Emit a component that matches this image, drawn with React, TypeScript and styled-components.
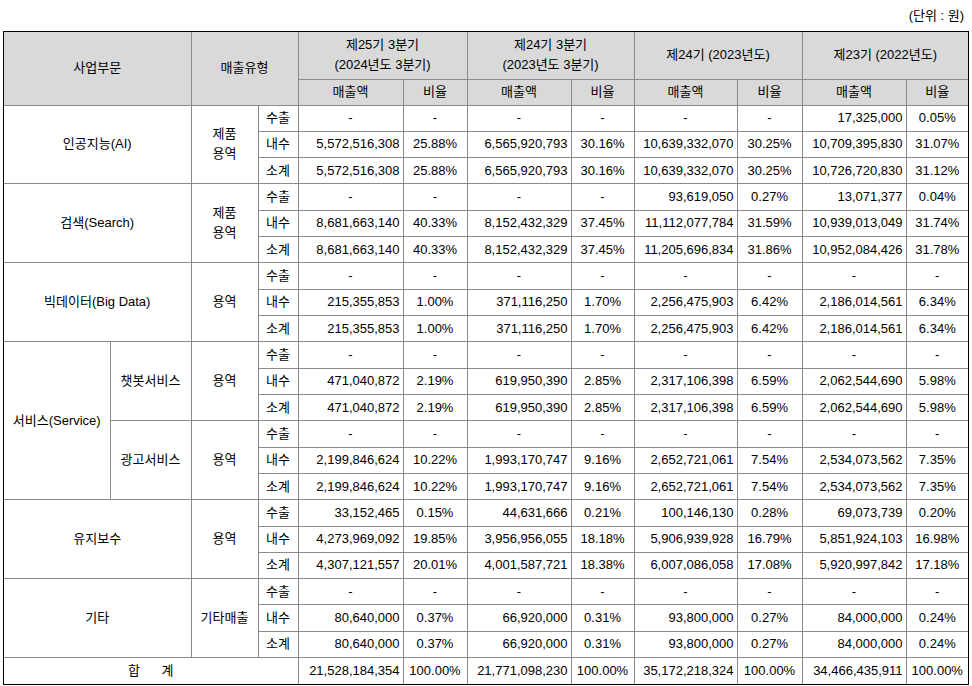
import React from "react";
import styled, { createGlobalStyle } from "styled-components";

const GlobalStyle = createGlobalStyle`
  html, body { margin: 0; padding: 0; background: #ffffff; }
  body {
    font-family: "Liberation Sans", "Noto Sans CJK KR", sans-serif;
    font-size: 13px;
    color: #000000;
  }
`;

const Page = styled.div`
  width: 972px;
  padding: 0 4px 0 3px;
  box-sizing: border-box;
`;

const Unit = styled.div`
  height: 31px;
  display: flex;
  align-items: center;
  justify-content: flex-end;
  padding-right: 4px;
  padding-top: 1px;
  box-sizing: border-box;
  line-height: 16px;
`;

const Frame = styled.div`
  border: 1px solid #000000;
  width: 966px;
  box-sizing: border-box;
`;

const Table = styled.table`
  width: 964px;
  border-collapse: collapse;
  table-layout: fixed;
  border-style: hidden;
`;

const HeadRow = styled.tr<{ $h: number }>`
  height: ${(p) => p.$h}px;
`;

const BodyRow = styled.tr`
  height: 26.32px;
`;

const HeadCell = styled.th`
  background: #d9d9d9;
  border: 1px solid #8a8a8a;
  font-weight: normal;
  text-align: center;
  vertical-align: middle;
  padding: 0;
  line-height: 20px;
`;

const Cell = styled.td<{ $align?: "left" | "center" | "right" }>`
  border: 1px solid #8a8a8a;
  padding: 0 ${(p) => (p.$align === "right" ? "3px" : "0")} 0 0;
  text-align: ${(p) => p.$align ?? "center"};
  vertical-align: middle;
  line-height: 20px;
  white-space: nowrap;
`;

const widths = [106, 81, 67, 40, 105, 64, 104, 63, 103, 65, 104, 62];

type Line = { kind: string; values: string[] };
type Sub = { label?: string; type: React.ReactNode; lines: Line[] };
type Group = { name: string; subs: Sub[] };

const dash8 = ["-", "-", "-", "-", "-", "-", "-", "-"];

const groups: Group[] = [
  {
    name: "인공지능(AI)",
    subs: [
      {
        type: (
          <>
            제품
            <br />
            용역
          </>
        ),
        lines: [
          { kind: "수출", values: ["-", "-", "-", "-", "-", "-", "17,325,000", "0.05%"] },
          { kind: "내수", values: ["5,572,516,308", "25.88%", "6,565,920,793", "30.16%", "10,639,332,070", "30.25%", "10,709,395,830", "31.07%"] },
          { kind: "소계", values: ["5,572,516,308", "25.88%", "6,565,920,793", "30.16%", "10,639,332,070", "30.25%", "10,726,720,830", "31.12%"] },
        ],
      },
    ],
  },
  {
    name: "검색(Search)",
    subs: [
      {
        type: (
          <>
            제품
            <br />
            용역
          </>
        ),
        lines: [
          { kind: "수출", values: ["-", "-", "-", "-", "93,619,050", "0.27%", "13,071,377", "0.04%"] },
          { kind: "내수", values: ["8,681,663,140", "40.33%", "8,152,432,329", "37.45%", "11,112,077,784", "31.59%", "10,939,013,049", "31.74%"] },
          { kind: "소계", values: ["8,681,663,140", "40.33%", "8,152,432,329", "37.45%", "11,205,696,834", "31.86%", "10,952,084,426", "31.78%"] },
        ],
      },
    ],
  },
  {
    name: "빅데이터(Big Data)",
    subs: [
      {
        type: "용역",
        lines: [
          { kind: "수출", values: dash8 },
          { kind: "내수", values: ["215,355,853", "1.00%", "371,116,250", "1.70%", "2,256,475,903", "6.42%", "2,186,014,561", "6.34%"] },
          { kind: "소계", values: ["215,355,853", "1.00%", "371,116,250", "1.70%", "2,256,475,903", "6.42%", "2,186,014,561", "6.34%"] },
        ],
      },
    ],
  },
  {
    name: "서비스(Service)",
    subs: [
      {
        label: "챗봇서비스",
        type: "용역",
        lines: [
          { kind: "수출", values: dash8 },
          { kind: "내수", values: ["471,040,872", "2.19%", "619,950,390", "2.85%", "2,317,106,398", "6.59%", "2,062,544,690", "5.98%"] },
          { kind: "소계", values: ["471,040,872", "2.19%", "619,950,390", "2.85%", "2,317,106,398", "6.59%", "2,062,544,690", "5.98%"] },
        ],
      },
      {
        label: "광고서비스",
        type: "용역",
        lines: [
          { kind: "수출", values: dash8 },
          { kind: "내수", values: ["2,199,846,624", "10.22%", "1,993,170,747", "9.16%", "2,652,721,061", "7.54%", "2,534,073,562", "7.35%"] },
          { kind: "소계", values: ["2,199,846,624", "10.22%", "1,993,170,747", "9.16%", "2,652,721,061", "7.54%", "2,534,073,562", "7.35%"] },
        ],
      },
    ],
  },
  {
    name: "유지보수",
    subs: [
      {
        type: "용역",
        lines: [
          { kind: "수출", values: ["33,152,465", "0.15%", "44,631,666", "0.21%", "100,146,130", "0.28%", "69,073,739", "0.20%"] },
          { kind: "내수", values: ["4,273,969,092", "19.85%", "3,956,956,055", "18.18%", "5,906,939,928", "16.79%", "5,851,924,103", "16.98%"] },
          { kind: "소계", values: ["4,307,121,557", "20.01%", "4,001,587,721", "18.38%", "6,007,086,058", "17.08%", "5,920,997,842", "17.18%"] },
        ],
      },
    ],
  },
  {
    name: "기타",
    subs: [
      {
        type: "기타매출",
        lines: [
          { kind: "수출", values: dash8 },
          { kind: "내수", values: ["80,640,000", "0.37%", "66,920,000", "0.31%", "93,800,000", "0.27%", "84,000,000", "0.24%"] },
          { kind: "소계", values: ["80,640,000", "0.37%", "66,920,000", "0.31%", "93,800,000", "0.27%", "84,000,000", "0.24%"] },
        ],
      },
    ],
  },
];

const totals = ["21,528,184,354", "100.00%", "21,771,098,230", "100.00%", "35,172,218,324", "100.00%", "34,466,435,911", "100.00%"];

const Values: React.FC<{ values: string[] }> = ({ values }) => (
  <>
    {values.map((v, i) => (
      <Cell key={i} $align={i % 2 === 0 && v !== "-" ? "right" : "center"}>
        {v}
      </Cell>
    ))}
  </>
);

export default function App() {
  const rows: React.ReactNode[] = [];
  groups.forEach((g, gi) => {
    const total = g.subs.reduce((n, s) => n + s.lines.length, 0);
    g.subs.forEach((s, si) => {
      s.lines.forEach((l, li) => {
        const first = si === 0 && li === 0;
        rows.push(
          <BodyRow key={`${gi}-${si}-${li}`}>
            {first && (
              <Cell rowSpan={total} colSpan={s.label ? 1 : 2}>
                {g.name}
              </Cell>
            )}
            {li === 0 && s.label && <Cell rowSpan={s.lines.length}>{s.label}</Cell>}
            {li === 0 && <Cell rowSpan={s.lines.length}>{s.type}</Cell>}
            <Cell>{l.kind}</Cell>
            <Values values={l.values} />
          </BodyRow>
        );
      });
    });
  });

  return (
    <Page>
      <GlobalStyle />
      <Unit>(단위 : 원)</Unit>
      <Frame>
        <Table>
          <colgroup>
            {widths.map((w, i) => (
              <col key={i} style={{ width: w }} />
            ))}
          </colgroup>
          <thead>
            <HeadRow $h={47}>
              <HeadCell colSpan={2} rowSpan={2}>사업부문</HeadCell>
              <HeadCell colSpan={2} rowSpan={2}>매출유형</HeadCell>
              <HeadCell colSpan={2}>
                제25기 3분기
                <br />
                (2024년도 3분기)
              </HeadCell>
              <HeadCell colSpan={2}>
                제24기 3분기
                <br />
                (2023년도 3분기)
              </HeadCell>
              <HeadCell colSpan={2}>제24기 (2023년도)</HeadCell>
              <HeadCell colSpan={2}>제23기 (2022년도)</HeadCell>
            </HeadRow>
            <HeadRow $h={26}>
              <HeadCell>매출액</HeadCell>
              <HeadCell>비율</HeadCell>
              <HeadCell>매출액</HeadCell>
              <HeadCell>비율</HeadCell>
              <HeadCell>매출액</HeadCell>
              <HeadCell>비율</HeadCell>
              <HeadCell>매출액</HeadCell>
              <HeadCell>비율</HeadCell>
            </HeadRow>
          </thead>
          <tbody>
            {rows}
            <BodyRow>
              <Cell colSpan={4}>합&nbsp;&nbsp;&nbsp;&nbsp;&nbsp;&nbsp;계</Cell>
              <Values values={totals} />
            </BodyRow>
          </tbody>
        </Table>
      </Frame>
    </Page>
  );
}
